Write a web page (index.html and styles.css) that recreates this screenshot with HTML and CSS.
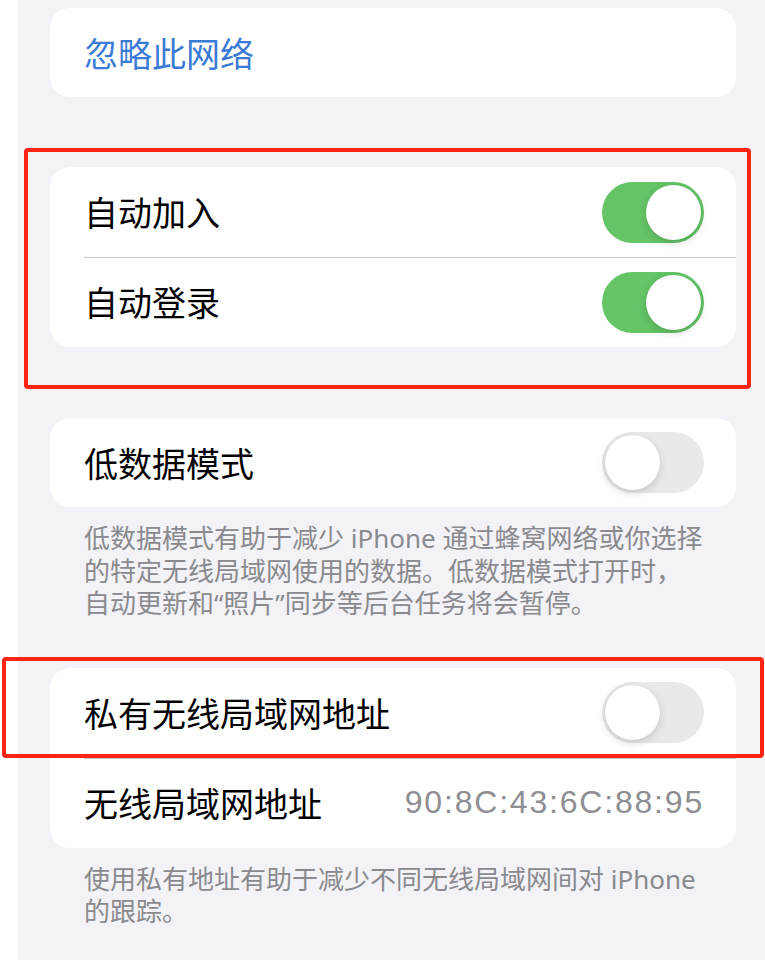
FILE: index.html
```html
<!DOCTYPE html>
<html lang="zh-CN">
<head>
    <meta charset="UTF-8">
    <meta name="viewport" content="width=device-width, initial-scale=1.0">
    <title>无线局域网</title>
    <link rel="stylesheet" href="styles.css">
</head>
<body>
    <div class="page">
        <div class="card card-forget">
            <div class="row">
                <span class="link">忽略此网络</span>
            </div>
        </div>

        <div class="card card-auto">
            <div class="row">
                <span class="label">自动加入</span>
                <span class="toggle on"><span class="knob"></span></span>
            </div>
            <div class="row">
                <span class="label">自动登录</span>
                <span class="toggle on"><span class="knob"></span></span>
            </div>
        </div>

        <div class="card card-low">
            <div class="row">
                <span class="label">低数据模式</span>
                <span class="toggle"><span class="knob"></span></span>
            </div>
        </div>
        <p class="note">低数据模式有助于减少 iPhone 通过蜂窝网络或你选择<br>的特定无线局域网使用的数据。低数据模式打开时，<br>自动更新和“照片”同步等后台任务将会暂停。</p>

        <div class="card card-private">
            <div class="row">
                <span class="label">私有无线局域网地址</span>
                <span class="toggle"><span class="knob"></span></span>
            </div>
            <div class="row">
                <span class="label">无线局域网地址</span>
                <span class="value">90:8C:43:6C:88:95</span>
            </div>
        </div>
        <p class="note">使用私有地址有助于减少不同无线局域网间对 iPhone<br>的跟踪。</p>
    </div>

    <!-- annotation boxes drawn over the screenshot -->
    <div class="mark mark-auto"></div>
    <div class="mark mark-private"></div>
</body>
</html>
```

FILE: styles.css
```css
body {
    margin: 0;
    padding: 0;
    background: #ffffff;
    font-family: "Noto Sans CJK SC", "Noto Sans", sans-serif;
    color: #000;
}
.page {
    margin-left: 18px;
    min-height: 960px;
    background: #f2f2f7;
    padding: 8px 29px 0 32px;
    box-sizing: border-box;
    overflow: hidden;
}
.card {
    background: #ffffff;
    border-radius: 20px;
    overflow: hidden;
}
.card-forget {
    height: 89px;
}
.card-auto {
    margin-top: 70px;
}
.card-low {
    margin-top: 71px;
}
.card-private {
    margin-top: 48px;
}
.row {
    height: 90px;
    display: flex;
    align-items: center;
    justify-content: space-between;
    padding: 0 32px 0 34px;
    position: relative;
}
.card-forget .row,
.card-low .row {
    height: 89px;
}
.row + .row::before {
    content: "";
    position: absolute;
    top: 0;
    left: 34px;
    right: 0;
    height: 1px;
    background: #c8c8cc;
}
.label {
    font-size: 34px;
    line-height: 1;
}
.link {
    font-size: 34px;
    line-height: 1;
    color: #3a7bd5;
}
.value {
    font-family: "Liberation Sans", "Noto Sans", sans-serif;
    font-size: 32px;
    letter-spacing: 1.8px;
    color: #8e8e93;
}
.toggle {
    width: 102px;
    height: 61px;
    border-radius: 31px;
    background: #e9e9eb;
    display: flex;
    align-items: center;
    padding: 0 3px;
    box-sizing: border-box;
}
.toggle.on {
    background: #64c466;
    justify-content: flex-end;
}
.knob {
    width: 55px;
    height: 55px;
    border-radius: 50%;
    background: #ffffff;
    box-shadow: 0 3px 8px rgba(0, 0, 0, 0.15), 0 0 1px rgba(0, 0, 0, 0.1);
}
.note {
    margin: 0;
    padding: 15px 0 0 34px;
    font-family: "Noto Sans", "Noto Sans CJK SC", sans-serif;
    font-size: 26px;
    line-height: 32.5px;
    color: #8a8a8e;
    white-space: nowrap;
}
.mark {
    position: absolute;
    border: 4px solid #ff2314;
    border-radius: 4px;
    box-sizing: border-box;
}
.mark-auto {
    left: 24px;
    top: 148px;
    width: 727px;
    height: 241px;
}
.mark-private {
    left: 2px;
    top: 657px;
    width: 762px;
    height: 101px;
}
```
